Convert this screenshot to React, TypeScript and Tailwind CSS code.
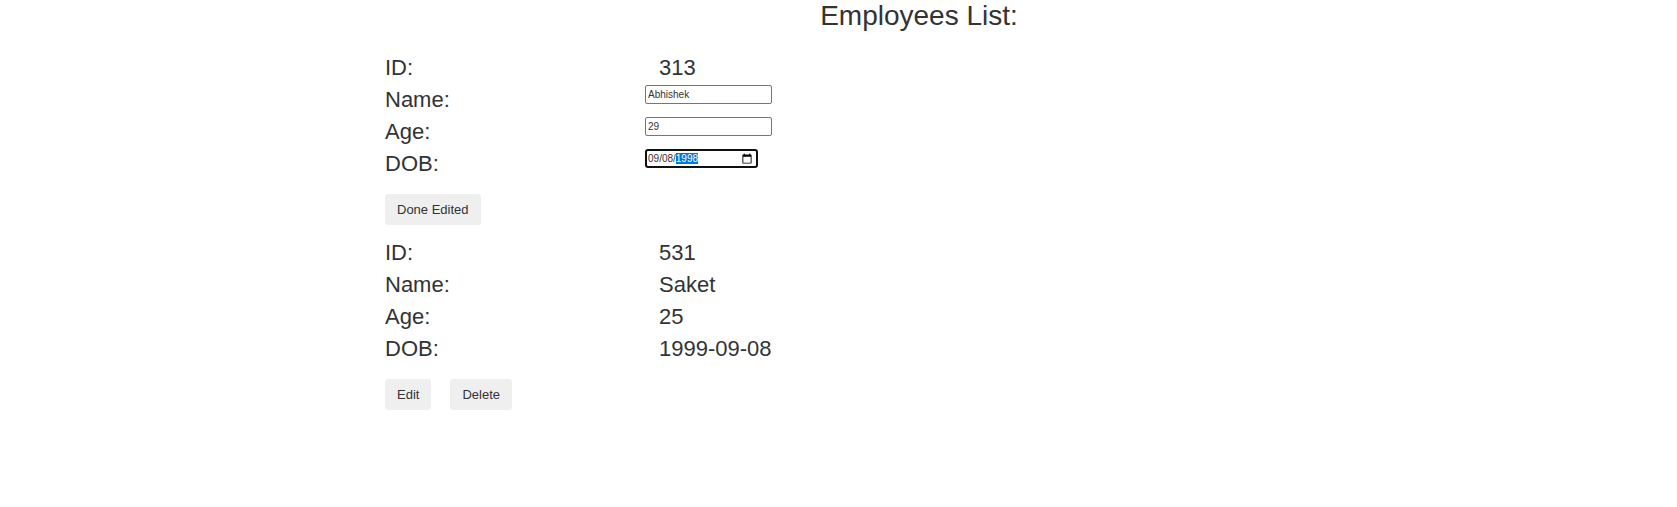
import { useState } from "react";

interface Employee {
  id: number;
  name: string;
  age: number;
  dob: string;
}

const initialEmployees: Employee[] = [
  { id: 313, name: "Abhishek", age: 29, dob: "1998-09-08" },
  { id: 531, name: "Saket", age: 25, dob: "1999-09-08" },
];

const rowClass = "grid h-8 grid-cols-[260px_1fr] items-start leading-8";
const inputClass =
  "block h-[19px] w-[127px] rounded-xs border border-[#767676] bg-white px-[2px] text-[10px] leading-3 outline-none";
const dateClass =
  "block h-[19px] w-[113px] rounded-[3px] border-2 border-[#101010] bg-white pl-px pr-[3px] text-[10px] leading-3 outline-none [&::-webkit-datetime-edit]:p-0 [&::-webkit-datetime-edit-fields-wrapper]:p-0 [&::-webkit-datetime-edit-month-field]:p-0 [&::-webkit-datetime-edit-day-field]:p-0 [&::-webkit-datetime-edit-year-field]:p-0 [&::-webkit-datetime-edit-year-field]:bg-[#0078d7] [&::-webkit-datetime-edit-year-field]:text-white [&::-webkit-calendar-picker-indicator]:size-[12px] [&::-webkit-calendar-picker-indicator]:p-0";
const buttonClass =
  "h-[31px] rounded-[3px] bg-[#efefef] px-3 text-[13px] leading-5";

interface CardProps {
  employee: Employee;
  editing: boolean;
  onChange: (next: Employee) => void;
  onEdit: () => void;
  onDone: () => void;
  onDelete: () => void;
}

function EmployeeCard({ employee, editing, onChange, onEdit, onDone, onDelete }: CardProps) {
  const fieldId = (field: string) => `${field}-${employee.id}`;
  return (
    <section className="mb-3">
      <div className={rowClass}>
        <span>ID:</span>
        <span className="pl-[14px]">{employee.id}</span>
      </div>
      {editing ? (
        <>
          <div className={rowClass}>
            <label htmlFor={fieldId("name")}>Name:</label>
            <div className="pt-px">
              <input
                id={fieldId("name")}
                className={inputClass}
                value={employee.name}
                onChange={(e) => onChange({ ...employee, name: e.target.value })}
              />
            </div>
          </div>
          <div className={rowClass}>
            <label htmlFor={fieldId("age")}>Age:</label>
            <div className="pt-px">
              <input
                id={fieldId("age")}
                className={inputClass}
                inputMode="numeric"
                value={employee.age}
                onChange={(e) => onChange({ ...employee, age: Number(e.target.value) })}
              />
            </div>
          </div>
          <div className={rowClass}>
            <label htmlFor={fieldId("dob")}>DOB:</label>
            <div className="pt-px">
              <input
                id={fieldId("dob")}
                type="date"
                className={dateClass}
                value={employee.dob}
                onChange={(e) => onChange({ ...employee, dob: e.target.value })}
              />
            </div>
          </div>
        </>
      ) : (
        <>
          <div className={rowClass}>
            <span>Name:</span>
            <span className="pl-[14px]">{employee.name}</span>
          </div>
          <div className={rowClass}>
            <span>Age:</span>
            <span className="pl-[14px]">{employee.age}</span>
          </div>
          <div className={rowClass}>
            <span>DOB:</span>
            <span className="pl-[14px]">{employee.dob}</span>
          </div>
        </>
      )}
      <div className="flex gap-[19px] pt-[14px]">
        {editing ? (
          <button type="button" className={buttonClass} onClick={onDone}>
            Done Edited
          </button>
        ) : (
          <>
            <button type="button" className={buttonClass} onClick={onEdit}>
              Edit
            </button>
            <button type="button" className={buttonClass} onClick={onDelete}>
              Delete
            </button>
          </>
        )}
      </div>
    </section>
  );
}

export default function App() {
  const [employees, setEmployees] = useState(initialEmployees);
  const [editingId, setEditingId] = useState<number | null>(313);

  return (
    <main className="bg-white pl-[385px] font-['Liberation_Sans',Arial,sans-serif] text-[22px] text-[#333333]">
      <h1 className="pr-56 text-center text-[28px] leading-8">
        Employees List:
      </h1>
      <div className="pt-5">
        {employees.map((employee) => (
          <EmployeeCard
            key={employee.id}
            employee={employee}
            editing={employee.id === editingId}
            onChange={(next) =>
              setEmployees((list) => list.map((item) => (item.id === next.id ? next : item)))
            }
            onEdit={() => setEditingId(employee.id)}
            onDone={() => setEditingId(null)}
            onDelete={() => setEmployees((list) => list.filter((item) => item.id !== employee.id))}
          />
        ))}
      </div>
    </main>
  );
}
